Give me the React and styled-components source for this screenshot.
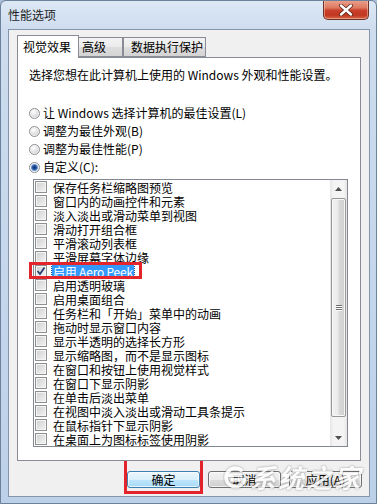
import styled, { createGlobalStyle } from 'styled-components';

const GlobalStyle = createGlobalStyle`
  html, body { margin: 0; padding: 0; background: #a9bed6; }
  #root { width: 377px; height: 504px; }
  * { box-sizing: border-box; }
`;

const FONT = `"Noto Sans CJK SC", "Noto Sans", sans-serif`;

const effects = [
  { label: '保存任务栏缩略图预览' },
  { label: '窗口内的动画控件和元素' },
  { label: '淡入淡出或滑动菜单到视图' },
  { label: '滑动打开组合框' },
  { label: '平滑滚动列表框' },
  { label: '平滑屏幕字体边缘' },
  { label: '启用 Aero Peek', checked: true, selected: true },
  { label: '启用透明玻璃' },
  { label: '启用桌面组合' },
  { label: '任务栏和「开始」菜单中的动画' },
  { label: '拖动时显示窗口内容' },
  { label: '显示半透明的选择长方形' },
  { label: '显示缩略图，而不是显示图标' },
  { label: '在窗口和按钮上使用视觉样式' },
  { label: '在窗口下显示阴影' },
  { label: '在单击后淡出菜单' },
  { label: '在视图中淡入淡出或滑动工具条提示' },
  { label: '在鼠标指针下显示阴影' },
  { label: '在桌面上为图标标签使用阴影' },
];

const radios = [
  { label: '让 Windows 选择计算机的最佳设置(L)' },
  { label: '调整为最佳外观(B)' },
  { label: '调整为最佳性能(P)' },
  { label: '自定义(C):', on: true },
];

export default function App() {
  return (
    <>
      <GlobalStyle />
      <Window>
        <TitleBar>
          <Title>性能选项</Title>
          <CloseButton>
            <svg width="16" height="12" viewBox="0 0 16 12">
              <path d="M3 1.5 L13 10.5 M13 1.5 L3 10.5" stroke="#5a2419" strokeWidth="4" strokeLinecap="round" />
              <path d="M3 1.5 L13 10.5 M13 1.5 L3 10.5" stroke="#ffffff" strokeWidth="2.4" strokeLinecap="round" />
            </svg>
          </CloseButton>
        </TitleBar>

        <Client>
          <TabRow>
            <Tab active width={62} pad={5}>视觉效果</Tab>
            <Tab width={45} pad={3}>高级</Tab>
            <Tab width={83} pad={7}>数据执行保护</Tab>
          </TabRow>

          <Panel>
            <Description>选择您想在此计算机上使用的 Windows 外观和性能设置。</Description>

            <RadioGroup>
              {radios.map((r) => (
                <RadioRow key={r.label}>
                  <RadioDot on={r.on} />
                  <span>{r.label}</span>
                </RadioRow>
              ))}
            </RadioGroup>

            <ListBox>
              <List>
                {effects.map((e) => (
                  <Row key={e.label}>
                    <CheckBox>
                      {e.checked && (
                        <svg width="10" height="10" viewBox="0 0 10 10">
                          <path d="M1.5 5 L4 8 L8.5 1.5" fill="none" stroke="#2b3f72" strokeWidth="1.8" />
                        </svg>
                      )}
                    </CheckBox>
                    <RowLabel selected={e.selected}>{e.label}</RowLabel>
                    {e.selected && <RedMark />}
                  </Row>
                ))}
              </List>
              <ScrollBar>
                <ArrowButton>
                  <svg width="7" height="4" viewBox="0 0 7 4"><path d="M0 4 L3.5 0 L7 4 Z" fill="#505050" /></svg>
                </ArrowButton>
                <Track>
                  <Thumb>
                    <Grip />
                    <Grip />
                    <Grip />
                  </Thumb>
                </Track>
                <ArrowButton>
                  <svg width="7" height="4" viewBox="0 0 7 4"><path d="M0 0 L7 0 L3.5 4 Z" fill="#505050" /></svg>
                </ArrowButton>
              </ScrollBar>
            </ListBox>
          </Panel>

          <ButtonRow>
            <DialogButton primary>
              确定
              <ButtonMark />
            </DialogButton>
            <DialogButton>取消</DialogButton>
            <DialogButton>应用(A)</DialogButton>
            <Watermark>
              <svg width="26" height="26" viewBox="0 0 28 28">
                <path d="M22 8 A10 10 0 1 0 24 17 L9 17 M6 12 L22 12" fill="none" stroke="#ffffff" strokeWidth="4" />
              </svg>
              <WatermarkText>系统之家</WatermarkText>
            </Watermark>
          </ButtonRow>
        </Client>
      </Window>
    </>
  );
}

const Window = styled.div`
  width: 377px;
  height: 504px;
  display: flex;
  flex-direction: column;
  background: linear-gradient(180deg, #dde8f5 0px, #cddcee 30px, #c4d6ec 60%, #bcd0e8 100%);
  border: 1px solid #6c819b;
  border-radius: 6px 6px 0 0;
  font-family: ${FONT};
  font-size: 12px;
  color: #000;
  overflow: hidden;
`;

const TitleBar = styled.div`
  height: 28px;
  display: flex;
  justify-content: space-between;
  align-items: flex-start;
  padding: 0 7px;
`;

const Title = styled.div`
  margin-top: 7px;
  line-height: 14px;
  font-size: 12px;
  color: #1e1e1e;
`;

const CloseButton = styled.div`
  width: 46px;
  height: 20px;
  margin-top: -1px;
  display: flex;
  align-items: center;
  justify-content: center;
  border: 1px solid #6e3327;
  border-top: none;
  border-radius: 0 0 5px 5px;
  background: linear-gradient(180deg, #eba38f 0%, #de7a62 40%, #c9402a 55%, #c23721 80%, #d8684b 100%);
  box-shadow: inset 0 0 0 1px rgba(255, 220, 200, 0.45);
`;

const Client = styled.div`
  flex: 1;
  margin: 0 6px 6px 7px;
  border: 1px solid #8494aa;
  background: #f0f0f0;
  padding: 5px 8px 0 8px;
  display: flex;
  flex-direction: column;
`;

const TabRow = styled.div`
  height: 22px;
  display: flex;
  align-items: flex-end;
`;

const Tab = styled.div`
  width: ${(p) => p.width}px;
  height: ${(p) => (p.active ? 23 : 20)}px;
  margin-bottom: ${(p) => (p.active ? -1 : 0)}px;
  margin-right: ${(p) => (p.active ? -1 : 0)}px;
  padding-left: ${(p) => p.pad}px;
  display: flex;
  align-items: center;
  border: 1px solid #898c95;
  border-bottom: ${(p) => (p.active ? 'none' : '1px solid #898c95')};
  background: ${(p) =>
    p.active ? '#ffffff' : 'linear-gradient(180deg, #f3f3f3 0%, #ebebeb 50%, #dedede 51%, #d4d4d4 100%)'};
  position: relative;
  z-index: ${(p) => (p.active ? 2 : 0)};
  line-height: 14px;
  white-space: nowrap;
`;

const Panel = styled.div`
  height: 404px;
  border: 1px solid #898c95;
  background: #ffffff;
  padding: 10px 12px 0 11px;
  display: flex;
  flex-direction: column;
  position: relative;
  z-index: 1;
`;

const Description = styled.div`
  height: 14px;
  line-height: 14px;
  white-space: nowrap;
`;

const RadioGroup = styled.div`
  margin-top: 22px;
  display: flex;
  flex-direction: column;
`;

const RadioRow = styled.div`
  height: 18px;
  display: flex;
  align-items: center;
  gap: 3px;
  line-height: 14px;
  white-space: nowrap;
`;

const RadioDot = styled.span`
  width: 11px;
  height: 11px;
  border-radius: 50%;
  border: 1px solid #8c8f94;
  background: ${(p) =>
    p.on
      ? 'radial-gradient(circle at 50% 50%, #0f2a5c 0px, #2b5aa6 2px, #7ea7da 3.5px, #e8eef6 4.5px)'
      : 'radial-gradient(circle at 40% 35%, #ffffff 0px, #f0f0f0 2px, #d6d6d6 5px)'};
  box-shadow: inset 0 0 0 1px #f7f7f7;
  flex: none;
`;

const ListBox = styled.div`
  margin-top: 3px;
  margin-left: 4px;
  width: 315px;
  height: 268px;
  border: 1px solid #828790;
  display: flex;
  background: #ffffff;
`;

const List = styled.div`
  flex: 1;
  display: flex;
  flex-direction: column;
`;

const Row = styled.div`
  height: 14px;
  display: flex;
  align-items: center;
  gap: 5px;
  padding-left: 1px;
  position: relative;
  white-space: nowrap;
`;

const CheckBox = styled.span`
  width: 12px;
  height: 12px;
  flex: none;
  border: 1px solid #8e8f8f;
  background: linear-gradient(135deg, #cfcfcf 0%, #e3e3e3 55%, #f4f4f4 100%);
  box-shadow: inset 0 0 0 1px #f4f4f4;
  display: flex;
  align-items: center;
  justify-content: center;
`;

const RowLabel = styled.span`
  line-height: 13px;
  height: 13px;
  padding: 0 1px;
  letter-spacing: ${(p) => (p.selected ? '-0.2px' : '0')};
  color: ${(p) => (p.selected ? '#ffffff' : '#000000')};
  background: ${(p) => (p.selected ? '#3399ff' : 'transparent')};
  outline: ${(p) => (p.selected ? '1px dotted #1d4f8f' : 'none')};
`;

const RedMark = styled.span`
  position: absolute;
  left: -5px;
  top: -2px;
  width: 113px;
  height: 17px;
  border: 3px solid #e3242b;
  pointer-events: none;
`;

const ScrollBar = styled.div`
  width: 17px;
  display: flex;
  flex-direction: column;
  background: linear-gradient(90deg, #e6e6e6 0%, #f4f4f4 20%, #f4f4f4 80%, #e6e6e6 100%);
`;

const ArrowButton = styled.div`
  height: 17px;
  flex: none;
  display: flex;
  align-items: center;
  justify-content: center;
`;

const Track = styled.div`
  flex: 1;
  padding: 1px 1px 12px 1px;
  display: flex;
  flex-direction: column;
`;

const Thumb = styled.div`
  height: 219px;
  border: 1px solid #979797;
  border-radius: 2px;
  background: linear-gradient(90deg, #f2f2f2 0%, #ebebeb 45%, #d9d9d9 55%, #cfcfcf 100%);
  box-shadow: inset 0 0 0 1px #f8f8f8;
  display: flex;
  flex-direction: column;
  align-items: center;
  justify-content: center;
  gap: 1px;
`;

const Grip = styled.span`
  width: 6px;
  height: 1px;
  background: #6e6e6e;
  box-shadow: 0 1px 0 #ffffff;
`;

const ButtonRow = styled.div`
  margin-top: 10px;
  margin-right: -1px;
  display: flex;
  justify-content: flex-end;
  gap: 8px;
  position: relative;
`;

const DialogButton = styled.div`
  width: 73px;
  height: 17px;
  display: flex;
  align-items: center;
  justify-content: center;
  position: relative;
  line-height: 14px;
  border: 1px solid ${(p) => (p.primary ? '#3c7fb1' : '#707070')};
  border-radius: 3px;
  background: ${(p) =>
    p.primary
      ? 'linear-gradient(180deg, #eaf6fd 0%, #d9f0fc 50%, #bee6fd 51%, #a7d9f5 100%)'
      : 'linear-gradient(180deg, #f2f2f2 0%, #ebebeb 50%, #dddddd 51%, #cfcfcf 100%)'};
  box-shadow: inset 0 0 0 1px rgba(255, 255, 255, 0.7);
`;

const ButtonMark = styled.span`
  position: absolute;
  left: -4px;
  top: -15px;
  width: 79px;
  height: 37px;
  border: 3px solid #e3242b;
  pointer-events: none;
`;

const Watermark = styled.div`
  position: absolute;
  right: 0;
  top: -9px;
  display: flex;
  align-items: center;
  gap: 2px;
  opacity: 0.85;
  filter: drop-shadow(0 0 1px rgba(90, 90, 90, 0.7));
  pointer-events: none;
`;

const WatermarkText = styled.div`
  color: #ffffff;
  font-size: 26px;
  line-height: 30px;
  font-weight: 700;
  letter-spacing: 2px;
  font-style: italic;
`;
